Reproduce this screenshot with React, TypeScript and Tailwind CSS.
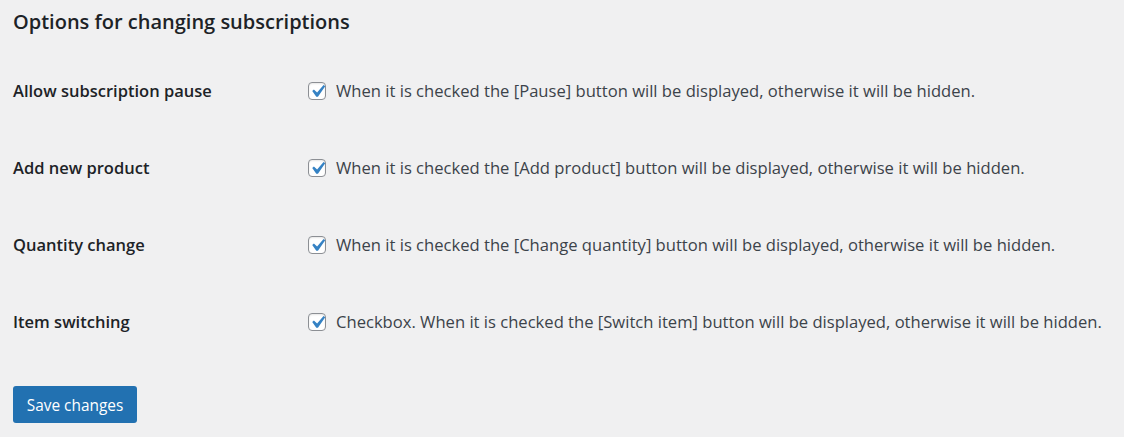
import React from "react";

const rows = [
  { label: "Allow subscription pause", text: "When it is checked the [Pause] button will be displayed, otherwise it will be hidden." },
  { label: "Add new product", text: "When it is checked the [Add product] button will be displayed, otherwise it will be hidden." },
  { label: "Quantity change", text: "When it is checked the [Change quantity] button will be displayed, otherwise it will be hidden." },
  { label: "Item switching", text: "Checkbox. When it is checked the [Switch item] button will be displayed, otherwise it will be hidden." },
];

function Check() {
  return (
    <span className="relative flex h-[18px] w-[18px] shrink-0 items-center justify-center rounded-[4px] border border-[#8c8f94] bg-white shadow-[inset_0_1px_2px_rgba(0,0,0,0.1)]">
      <svg viewBox="0 0 20 20" className="absolute h-[25px] w-[25px]">
        <path d="M14.83 4.89l1.34.94-5.81 8.38H9.02L5.78 9.67l1.34-1.25 2.57 2.4z" fill="#3582c4" />
      </svg>
    </span>
  );
}

export default function App() {
  return (
    <div className="min-h-[437px] w-full bg-[#f0f0f1] pl-[13px] text-[#1d2327]" style={{ fontFamily: '"Open Sans", "Noto Sans", sans-serif' }}>
      <div className="flex h-[53px] items-center pb-[10px]">
        <h2 className="text-[20px] font-semibold">Options for changing subscriptions</h2>
      </div>
      <div className="flex flex-col">
        {rows.map((r) => (
          <div key={r.label} className="flex h-[77px] items-center">
            <div className="w-[295px] text-[16.5px] font-semibold">{r.label}</div>
            <label className="flex items-center gap-[10px] text-[16.6px] text-[#3c434a]">
              <Check />
              <span>{r.text}</span>
            </label>
          </div>
        ))}
      </div>
      <div className="pt-[25px]">
        <button className="h-[37px] w-[124px] rounded-[3px] bg-[#2271b1] pt-[2px] text-[15.4px] text-white">Save changes</button>
      </div>
    </div>
  );
}
